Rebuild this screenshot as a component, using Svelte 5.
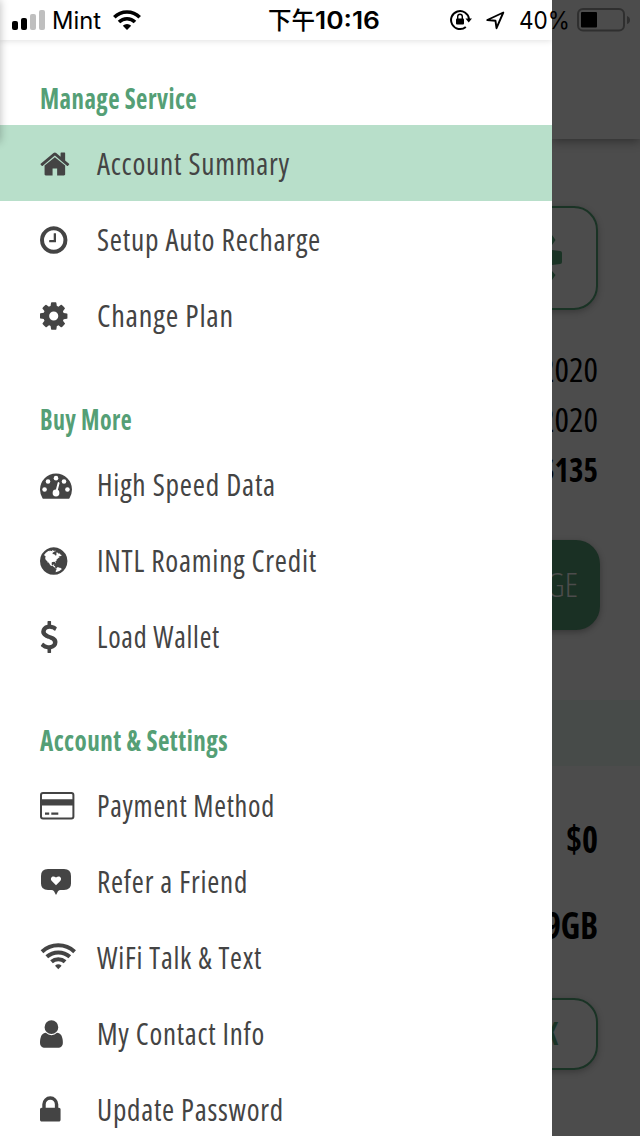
<script>
  const icons = {
    home: { x: 64, d: 'M1472 992v480q0 26-19 45t-45 19h-384v-384h-256v384h-384q-26 0-45-19t-19-45v-480q0-1 .5-3t.5-3l575-474 575 474q1 2 1 6zm223-69l-62 74q-8 9-21 11h-3q-13 0-21-7l-692-577-692 577q-12 8-24 7-13-2-21-11l-62-74q-8-10-7-23.5t11-21.5l719-599q32-26 76-26t76 26l244 204v-195q0-14 9-23t23-9h192q14 0 23 9t9 23v408l219 182q10 8 11 21.5t-7 23.5z' },
    clock: { x: 128, d: 'M1024 544v448q0 14-9 23t-23 9h-320q-14 0-23-9t-9-23v-64q0-14 9-23t23-9h224v-352q0-14 9-23t23-9h64q14 0 23 9t9 23zm416 352q0-148-73-273t-198-198-273-73-273 73-198 198-73 273 73 273 198 198 273 73 273-73 198-198 73-273zm224 0q0 209-103 385.5t-279.5 279.5-385.5 103-385.5-103-279.5-279.5-103-385.5 103-385.5 279.5-279.5 385.5-103 385.5 103 279.5 279.5 103 385.5z' },
    cog: { x: 128, d: 'M1152 896q0-106-75-181t-181-75-181 75-75 181 75 181 181 75 181-75 75-181zm512-109v222q0 12-8 23t-20 13l-185 28q-19 54-39 91 35 50 107 138 10 12 10 25t-9 23q-27 37-99 108t-94 71q-12 0-26-9l-138-108q-44 23-91 38-16 136-29 186-7 28-36 28h-222q-14 0-24.5-8.5t-11.5-21.5l-28-184q-49-16-90-37l-141 107q-10 9-25 9-14 0-25-11-126-114-165-168-7-10-7-23 0-12 8-23 15-21 51-66.5t54-70.5q-27-50-41-99l-183-27q-13-2-21-12.5t-8-23.5v-222q0-12 8-23t19-13l186-28q14-46 39-92-40-57-107-138-10-12-10-24 0-10 9-23 26-36 98.5-107.5t94.5-71.5q13 0 26 10l138 107q44-23 91-38 16-136 29-186 7-28 36-28h222q14 0 24.5 8.5t11.5 21.5l28 184q49 16 90 37l142-107q9-9 24-9 13 0 25 10 129 119 165 170 7 8 7 22 0 12-8 23-15 21-51 66.5t-54 70.5q26 50 41 98l183 28q13 2 21 12.5t8 23.5z' },
    globe: { x: 128, d: 'M896 128q209 0 385.5 103t279.5 279.5 103 385.5-103 385.5-279.5 279.5-385.5 103-385.5-103-279.5-279.5-103-385.5 103-385.5 279.5-279.5 385.5-103zm274 521q-2 1-9.5 9.5t-13.5 9.5q2 0 4.5-5t5-11 3.5-7q6-7 22-15 14-6 52-12 34-8 51 11-2-2 9.5-13t14.5-12q3-2 15-4.5t15-7.5l2-22q-12 1-17.5-7t-6.5-21q0 2-6 8 0-7-4.5-8t-11.5 1-9 1q-10-3-15-7.5t-8-16.5-4-15q-2-5-9.5-11t-9.5-10q-1-2-2.5-5.5t-3-6.5-4-5.5-5.5-2.5-7 5-7.5 10-4.5 5q-3-2-6-1.5t-4.5 1-4.5 3-5 3.5q-3 2-8.5 3t-8.5 2q15-5-1-11-10-4-16-3 9-4 7.5-12t-8.5-14h5q-1-4-8.5-8.5t-17.5-8.5-13-6q-8-5-34-9.5t-33-.5q-5 6-4.5 10.5t4 14 3.5 12.5q1 6-5.5 13t-6.5 12q0 7 14 15.5t10 21.5q-3 8-16 16t-16 12q-5 8-1.5 18.5t10.5 16.5q2 2 1.5 4t-3.5 4.5-5.5 4-6.5 3.5l-3 2q-11 5-20.5-6t-13.5-26q-7-25-16-30-23-8-29 1-5-13-41-26-25-9-58-4 6-1 0-15-7-15-19-12 3-6 4-17.5t1-13.5q3-13 12-23 1-1 7-8.5t9.5-13.5.5-6q35 4 50-11 5-5 11.5-17t10.5-17q9-6 14-5.5t14.5 5.5 14.5 5q14 1 15.5-11t-7.5-20q12 1 3-17-4-7-8-9-12-4-27 5-8 4 2 8-1-1-9.5 10.5t-16.5 17.5-16-5q-1-1-5.5-13.5t-9.5-13.5q-8 0-16 15 3-8-11-15t-24-8q19-12-8-27-7-4-20.5-5t-19.5 4q-5 7-5.5 11.5t5 8 10.5 5.5 11.5 4 8.5 3q14 10 8 14-2 1-8.5 3.5t-11.5 4.5-6 4q-3 4 0 14t-2 14q-5-5-9-17.5t-7-16.5q7 9-25 6l-10-1q-4 0-16 2t-20.5 1-13.5-8q-4-8 0-20 1-4 4-2-4-3-11-9.5t-10-8.5q-46 15-94 41 6 1 12-1 5-2 13-6.5t10-5.5q34-14 42-7l5-5q14 16 20 25-7-4-30-1-20 6-22 12 7 12 5 18-4-3-11.5-10t-14.5-11-15-5q-16 0-22 1-146 80-235 222 7 7 12 8 4 1 5 9t2.5 11 11.5-3q9 8 3 19 1-1 44 27 19 17 21 21 3 11-10 18-1-2-9-9t-9-4q-3 5 .5 18.5t10.5 12.5q-7 0-9.5 16t-2.5 35.5-1 23.5l2 1q-3 12 5.5 34.5t21.5 19.5q-13 3 20 43 6 8 8 9 3 2 12 7.5t15 10 10 10.5q4 5 10 22.5t14 23.5q-2 6 9.5 20t10.5 23q-1 0-2.5 1t-2.5 1q3 7 15.5 14t15.5 13q1 3 2 10t3 11 8 2q2-20-24-62-15-25-17-29-3-5-5.5-15.5t-4.5-14.5q2 0 6 1.5t8.5 3.5 7.5 4 2 3q-3 7 2 17.5t12 18.5 17 19 12 13q6 6 14 19.5t0 13.5q9 0 20 10t17 20q5 8 8 26t5 24q2 7 8.5 13.5t12.5 9.5l16 8 13 7q5 2 18.5 10.5t21.5 11.5q10 4 16 4t14.5-2.5 13.5-3.5q15-2 29 15t21 21q36 19 55 11-2 1 .5 7.5t8 15.5 9 14.5 5.5 8.5q5 6 18 15t18 15q6-4 7-9-3 8 7 20t18 10q14-3 14-32-31 15-49-18 0-1-2.5-5.5t-4-8.5-2.5-8.5 0-7.5 5-3q9 0 10-3.5t-2-12.5-4-13q-1-8-11-20t-12-15q-5 9-16 8t-16-9q0 1-1.5 5.5t-1.5 6.5q-13 0-15-1 1-3 2.5-17.5t3.5-22.5q1-4 5.5-12t7.5-14.5 4-12.5-4.5-9.5-17.5-2.5q-19 1-26 20-1 3-3 10.5t-5 11.5-9 7q-7 3-24 2t-24-5q-13-8-22.5-29t-9.5-37q0-10 2.5-26.5t3-25-5.5-24.5q3-2 9-9.5t10-10.5q2-1 4.5-1.5t4.5 0 4-1.5 3-6q-1-1-4-3-3-3-4-3 7 3 28.5-1.5t27.5 1.5q15 11 22-2 0-1-2.5-9.5t-.5-13.5q5 27 29 9 3 3 15.5 5t17.5 5q3 2 7 5.5t5.5 4.5 5-.5 8.5-6.5q10 14 12 24 11 40 19 44 7 3 11 2t4.5-9.5 0-14-1.5-12.5l-1-8v-18l-1-8q-15-3-18.5-12t1.500-18.500 15-18.500q1-1 8-3.500t15.500-6.500 12.500-8q21-19 15-35 7 0 11-9-1 0-5-3t-7.500-5-4.500-2q9-5 2-16 5-3 7.500-11t7.500-10q9 12 21 2 7-8 1-16 5-7 20.500-10.500t18.500-9.500q7 2 8-2t1-12 3-12q4-5 15-9t13-5l17-11q3-4 0-4 18 2 31-11 10-11-6-20 3-6-3-9.500t-15-5.500q3-1 11.500-.5t10.500-1.500q15-10-7-16-17-5-43 12zm-163 877q206-36 351-189-3-3-12.500-4.500t-12.500-3.500q-18-7-24-8 1-7-2.500-13t-8-9-12.500-8-11-7q-2-2-7-6t-7-5.500-7.500-4.500-8.500-2-10 1l-3 1q-3 1-5.500 2.500t-5.500 3-4 3 0 2.500q-21-17-36-22-5-1-11-5.500t-10.500-7-10-1.500-11.500 7q-5 5-6 15t-2 13q-7-5 0-17.500t2-18.500q-3-6-10.500-4.500t-12 4.500-11.500 8.500-9 6.500-8.500 5.500-8.500 7.500q-3 4-6 12t-5 11q-2-4-11.500-6.500t-9.500-5.500q2 10 4 35t5 38q7 31-12 48-27 25-29 40-4 22 12 26 0 7-8 20.500t-7 21.500q0 6 2 16z' },
    dollar: { x: 384, d: 'M1362 1185q0 153-99.5 263.5t-258.5 136.5v175q0 14-9 23t-23 9h-135q-13 0-22.5-9.5t-9.5-22.5v-175q-66-9-127.5-31t-101.5-44.5-74-48-46.5-37.5-17.5-18q-17-21-2-41l103-135q7-10 23-12 15-2 24 9l2 2q113 99 243 125 37 8 74 8 81 0 142.5-43t61.5-122q0-28-15-53t-33.5-42-58.5-37.5-66-32-80-32.5q-39-16-61.5-25t-61.5-26.5-62.5-31-56.5-35.5-53.5-42.5-43.5-49-35.5-58-21-66.5-8.5-78q0-138 98-242t255-134v-180q0-13 9.5-22.5t22.5-9.5h135q14 0 23 9t9 23v176q57 6 110.5 23t87 33.5 63.5 37.5 39 29 15 14q17 18 5 38l-81 146q-8 15-23 16-14 3-27-7-3-3-14.5-12t-39-26.5-58.5-32-74.5-26-85.5-11.5q-95 0-155 43t-60 111q0 26 8.5 48t29.5 41.5 39.5 33 56 31 60.5 27 70 27.5q53 20 81 31.5t76 35 75.5 42.5 62 50 53 63.5 31.5 76.5 13 94z' },
    user: { x: 256, d: 'M1536 1399q0 109-62.5 187t-150.5 78h-854q-88 0-150.5-78t-62.5-187q0-85 8.5-160.5t31.5-152 58.5-131 94-89 134.5-34.5q131 128 313 128t313-128q76 0 134.5 34.5t94 89 58.5 131 31.5 152 8.5 160.5zm-256-887q0 159-112.5 271.5t-271.5 112.5-271.5-112.5-112.5-271.5 112.5-271.5 271.5-112.5 271.5 112.5 112.5 271.5z' },
    lock: { x: 320, d: 'M640 768h512v-192q0-106-75-181t-181-75-181 75-75 181v192zm832 96v576q0 40-28 68t-68 28h-960q-40 0-68-28t-28-68v-576q0-40 28-68t68-28h32v-192q0-184 132-316t316-132 316 132 132 316v192h32q40 0 68 28t28 68z' }
  };

  const sections = [
    { title: 'Manage Service', width: 157, items: [
      { icon: 'home', text: 'Account Summary', width: 193, active: true },
      { icon: 'clock', text: 'Setup Auto Recharge', width: 224 },
      { icon: 'cog', text: 'Change Plan', width: 137 }
    ] },
    { title: 'Buy More', width: 92, items: [
      { icon: 'gauge', text: 'High Speed Data', width: 179 },
      { icon: 'globe', text: 'INTL Roaming Credit', width: 220 },
      { icon: 'dollar', text: 'Load Wallet', width: 123 }
    ] },
    { title: 'Account & Settings', width: 188, items: [
      { icon: 'card', text: 'Payment Method', width: 178 },
      { icon: 'refer', text: 'Refer a Friend', width: 151 },
      { icon: 'wifi', text: 'WiFi Talk & Text', width: 165 },
      { icon: 'user', text: 'My Contact Info', width: 168 },
      { icon: 'lock', text: 'Update Password', width: 187 }
    ] }
  ];
</script>

{#snippet fitted(text, width, height, baseline, cls)}
  <svg class="fit {cls}" {width} {height}>
    <text x="0" y={baseline} textLength={width} lengthAdjust="spacingAndGlyphs">{text}</text>
  </svg>
{/snippet}

{#snippet glyph(name)}
  {#if icons[name]}
    <svg class="icon" width="32" height="32" viewBox="{icons[name].x} 0 1792 1792"><path d={icons[name].d} /></svg>
  {:else if name === 'gauge'}
    <svg class="icon" width="32" height="32" viewBox="0 0 1792 1792">
      <path d="M1792 1152q0 261-141 483-19 29-54 29h-1402q-35 0-54-29-141-221-141-483 0-182 71-348t191-286 286-191 348-71 348 71 286 191 191 286 71 348z" />
      <g class="hole">
        <circle cx="256" cy="1152" r="128" /><circle cx="448" cy="704" r="128" /><circle cx="896" cy="512" r="128" />
        <circle cx="1344" cy="704" r="128" /><circle cx="1536" cy="1152" r="128" /><circle cx="896" cy="1344" r="190" />
        <path class="needle" d="M920 1260L1042 790" />
      </g>
    </svg>
  {:else if name === 'card'}
    <svg class="icon" width="36" height="32" viewBox="0 0 36 32">
      <rect class="line" x="1" y="3" width="32.4" height="25.6" rx="2" />
      <path d="M1 9.3h32.4v6.2H1zM5 22.600h4.200v2.200H5zM11.300 22.600h7v2.200h-7z" />
    </svg>
  {:else if name === 'refer'}
    <svg class="icon" width="36" height="32" viewBox="0 0 36 32">
      <path d="M8 3h16q7 0 7 7v7.500q0 6.500-7 6.500h-3.500q-1.500 0-2.500 1.200L16 29l-2-3.800Q13 24 11.500 24H8q-7 0-7-6.500V10q0-7 7-7z" />
      <path class="hole" d="M16 19.300l-4.200-4.200c-2.300-2.500.3-6.500 4.200-3.600 3.900-2.900 6.500 1.100 4.200 3.600z" />
    </svg>
  {:else}
    <svg class="icon" width="36" height="32" viewBox="0 0 36 32">
      <g class="arc"><path d="M2 9.700a24 24 0 0 1 32.600 0" /><path d="M6.800 14.800a17.200 17.200 0 0 1 23 0" /><path d="M11.500 19.800a10.200 10.200 0 0 1 13.600 0" /></g>
      <path d="M18.300 27.200l-3.300-3.400a5 5 0 0 1 6.600 0z" />
    </svg>
  {/if}
{/snippet}

<div class="screen">
  <nav class="drawer">
    <div class="topbar"></div>
    {#each sections as section}
      <section>
        <h2>{@render fitted(section.title, section.width, 36, 20, 'heading')}</h2>
        <ul>
          {#each section.items as item}
            <li class:active={item.active}>
              <span class="slot">{@render glyph(item.icon)}</span>
              {@render fitted(item.text, item.width, 76, 50, 'label')}
            </li>
          {/each}
        </ul>
      </section>
    {/each}
    <div class="edge"></div>
  </nav>

  <main class="page">
    <div class="pagehead"></div>
    <div class="box plan">
      <svg width="12" height="50" viewBox="0 0 12 50"><path d="M0 2l3.500 5-3.500 5zM0 17l8 1q2 0 2 2v9q0 2-2 2l-8 1zM0 38l3.500 4-3.500 5z" /></svg>
    </div>
    <div class="rows">
      {@render fitted('2020', 58, 50, 37, 'thin')}
      {@render fitted('2020', 58, 50, 37, 'thin')}
      {@render fitted('$135', 58, 50, 37, 'bold')}
    </div>
    <div class="button">{@render fitted('RECHARGE', 120, 90, 57, 'pale')}</div>
    <div class="band"></div>
    <div class="totals">
      {@render fitted('$0', 32, 86, 87, 'total')}
      {@render fitted('9GB', 53, 86, 87, 'total')}
    </div>
    <div class="box link">{@render fitted('K', 14, 68, 45, 'green')}</div>
  </main>

  <header class="status">
    <div class="left">
      <svg width="34" height="20" viewBox="0 0 34 20"><rect y="11" width="6" height="9" rx="2" /><rect x="9" y="8" width="6" height="12" rx="2" /><g fill="#bfbfbf"><rect x="18" y="4" width="6" height="16" rx="2" /><rect x="27" width="6" height="20" rx="2" /></g></svg>
      {@render fitted('Mint', 49, 40, 29, 'sys')}
      <svg class="signal" width="28" height="20" viewBox="0 0 28 20"><g fill="none" stroke="#000" stroke-width="3.600"><path d="M1.300 7.200a18 18 0 0 1 25.400 0" /><path d="M6 12a11.400 11.400 0 0 1 16 0" /></g><path d="M14 20l-4.200-4.300a6 6 0 0 1 8.400 0z" /></svg>
    </div>
    <div class="clock">
      {@render fitted('下午', 47, 40, 29, 'half')}
      {@render fitted('10:16', 65, 40, 29, 'time')}
    </div>
    <div class="right">
      <svg width="22" height="22" viewBox="0 0 22 22"><path d="M15.800 18A9 9 0 1 1 19 10" fill="none" stroke="#000" stroke-width="2" /><path d="M15.500 9.500H22l-3.300 4z" /><rect x="6" y="9.500" width="8" height="6" rx="1" /><path d="M7.700 10V7.500a2.300 2.300 0 0 1 4.600 0V10" fill="none" stroke="#000" stroke-width="1.400" /></svg>
      <svg width="19" height="19" viewBox="0 0 19 19"><path d="M17.300 1.500L1.300 9l8.200.8 1 7.400z" fill="none" stroke="#000" stroke-width="1.900" stroke-linejoin="round" /></svg>
      {@render fitted('40%', 51, 40, 29, 'sys')}
      <svg width="54" height="24" viewBox="0 0 54 24"><rect x="1" y="1" width="46" height="21.500" rx="5" fill="none" stroke="#2f2f2f" stroke-width="2" /><rect x="4" y="4" width="16" height="15.500" rx="1" /><path d="M50 8q3 1 3 4t-3 4z" fill="#2f2f2f" /></svg>
    </div>
  </header>
</div>

<style>
  :global(body) { margin: 0; overflow: hidden; }
  .screen { position: relative; display: grid; grid-template-columns: 552px 88px; width: 640px; height: 1136px; overflow: hidden; background: #fff; }
  .fit { display: block; flex: none; overflow: visible; }
  .fit text { font-family: "Open Sans", "Liberation Sans Narrow", "Liberation Sans", sans-serif; font-stretch: 75%; }
  .drawer { position: relative; height: 1136px; overflow: hidden; background: #fff; }
  .topbar { height: 40px; margin-bottom: 49px; box-shadow: 0 1px 6px rgba(0, 0, 0, .12); }
  h2 { height: 36px; margin: 0 0 0 40px; }
  ul { margin: 0 0 57px; padding: 0; list-style: none; }
  li { display: flex; height: 76px; padding-left: 40px; }
  .active { background: #b8dfca; }
  .slot { width: 57px; padding-top: 22.600px; flex: none; }
  .icon { display: block; fill: #444; }
  .hole { fill: #fff; }
  .needle { stroke: #fff; stroke-width: 110; stroke-linecap: round; }
  .line { fill: none; stroke: #444; stroke-width: 2; }
  .arc { fill: none; stroke: #444; stroke-width: 4; }
  .heading text { font-size: 28px; font-weight: 700; letter-spacing: .5px; fill: #559f76; }
  .label text { font-size: 31px; font-weight: 400; letter-spacing: .8px; fill: #444; }
  .edge { position: absolute; left: -8px; top: 0; width: 8px; height: 142px; box-shadow: 0 0 8px rgba(0, 0, 0, .28); }

  .page { height: 1136px; overflow: hidden; background: #4c4c4c; display: flex; flex-direction: column; align-items: flex-end; }
  .pagehead { width: 88px; height: 139px; flex: none; box-shadow: 0 2px 10px rgba(0, 0, 0, .4); }
  .box { box-sizing: border-box; width: 120px; border: 2px solid #1a3325; border-radius: 24px; margin-right: 42px; flex: none; box-shadow: 0 2px 6px rgba(0, 0, 0, .25); }
  .plan { height: 104px; margin-top: 67px; }
  .plan svg { display: block; margin: 25px 0 0 72px; fill: #1a3325; }
  .rows { height: 150px; margin: 35px 42px 0 0; flex: none; }
  .thin text { font-size: 33px; font-weight: 400; fill: #000; }
  .bold text { font-size: 33px; font-weight: 700; fill: #000; }
  .button { display: flex; box-sizing: border-box; justify-content: flex-end; width: 200px; height: 90px; padding-right: 22px; margin: 45px 40px 0 0; border-radius: 24px; background: #1a3024; box-shadow: 0 2px 6px rgba(0, 0, 0, .3); flex: none; }
  .pale text { font-size: 33px; font-weight: 300; fill: #4c4c4c; }
  .band { width: 88px; height: 66px; margin-top: 70px; background: #474b49; flex: none; }
  .totals { display: flex; flex-direction: column; align-items: flex-end; height: 172px; margin: 0 42px 0 0; flex: none; }
  .total text { font-size: 38px; font-weight: 700; fill: #000; }
  .link { height: 72px; margin-top: 60px; display: flex; justify-content: flex-end; padding-right: 38px; }
  .green text { font-size: 32px; font-weight: 700; fill: #1a3325; }

  .status { position: absolute; left: 0; top: 0; box-sizing: border-box; width: 640px; height: 40px; display: grid; grid-template-columns: 256px 182px 190px; padding-left: 12px; align-items: center; }
  .left { display: flex; align-items: center; gap: 6px; }
  .signal { margin-left: 6px; }
  .sys text { font-family: Inter, sans-serif; font-size: 24px; font-stretch: normal; fill: #000; }
  .clock { display: flex; }
  .half text { font-family: "Noto Sans CJK TC", sans-serif; font-size: 24px; font-weight: 500; fill: #000; }
  .time text { font-family: Inter, sans-serif; font-size: 24px; font-weight: 600; font-stretch: normal; fill: #000; }
  .right { display: flex; align-items: center; }
  .right svg:nth-child(2) { margin: 0 14px; }
  .right svg:nth-child(4) { margin-left: 7px; }
</style>
